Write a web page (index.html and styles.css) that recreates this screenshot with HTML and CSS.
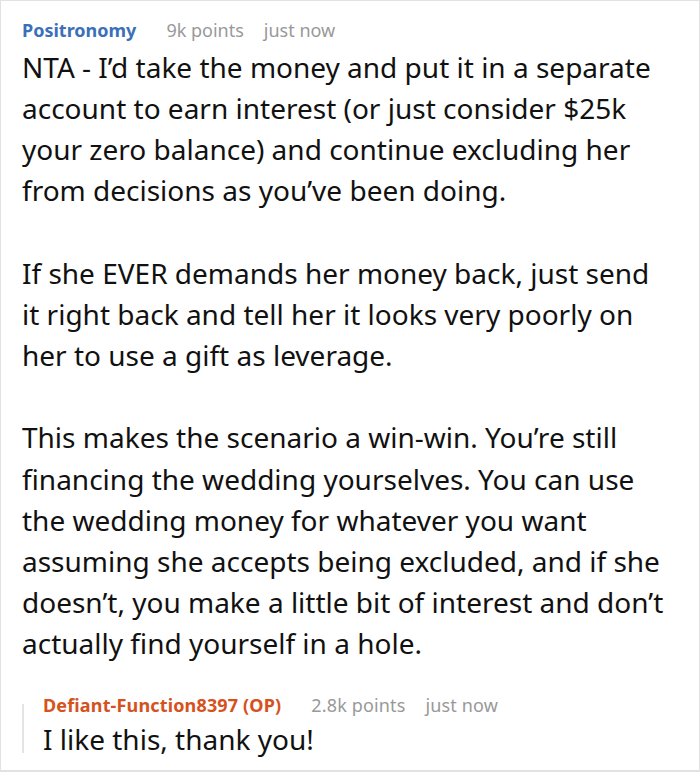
FILE: index.html
```html
<!DOCTYPE html>
<html>
<head>
<meta charset="utf-8">
<link rel="stylesheet" href="styles.css">
</head>
<body>
<div class="card">
  <div class="meta">
    <span class="author">Positronomy</span>
    <span class="info">9k points</span>
    <span class="info">just now</span>
  </div>
  <div class="body">
    <p>NTA - I’d take the money and put it in a separate account to earn interest (or just consider $25k your zero balance) and continue excluding her from decisions as you’ve been doing.</p>
    <p>If she EVER demands her money back, just send it right back and tell her it looks very poorly on her to use a gift as leverage.</p>
    <p>This makes the scenario a win-win. You’re still financing the wedding yourselves. You can use the wedding money for whatever you want assuming she accepts being excluded, and if she doesn’t, you make a little bit of interest and don’t actually find yourself in a hole.</p>
  </div>
  <div class="reply">
    <div class="meta">
      <span class="author op">Defiant-Function8397 (OP)</span>
      <span class="info">2.8k points</span>
      <span class="info">just now</span>
    </div>
    <div class="body reply-body">
      <p>I like this, thank you!</p>
    </div>
  </div>
</div>
</body>
</html>
```
FILE: styles.css
```css
html, body {
  margin: 0;
  padding: 0;
  background: #fff;
}
body {
  font-family: "Noto Sans", "Open Sans", sans-serif;
  color: #111;
}
.card {
  box-sizing: border-box;
  width: 700px;
  height: 772px;
  border: 1px solid #e2e2e2;
  border-bottom-width: 2px;
  padding: 15px 34px 0 21px;
}
.meta {
  display: flex;
  font-size: 18px;
  line-height: 28px;
  align-items: baseline;
  white-space: nowrap;
}
.author {
  font-weight: 700;
  color: #3b70b8;
  margin-right: 30px;
}
.author.op {
  color: #d5521d;
}
.info {
  color: #999;
  margin-right: 20px;
}
.body {
  font-size: 28px;
  line-height: 41.15px;
  margin-top: 3px;
}
.body p {
  margin: 0 0 41.15px 0;
}
.body p:last-child {
  margin-bottom: 0;
}
.reply {
  margin-top: 27px;
  padding-left: 21px;
  background: linear-gradient(#e4e4e4, #e4e4e4) no-repeat 0 13px / 2px calc(100% - 20px);
}
.reply .meta {
  letter-spacing: 0.15px;
}
.reply-body {
  margin-top: 0;
}
```
